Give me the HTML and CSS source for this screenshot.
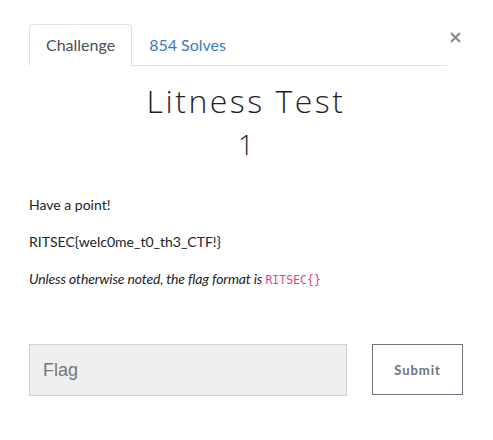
FILE: index.html
```html
<!DOCTYPE html>
<html>
<head>
<meta charset="utf-8">
<link rel="stylesheet" href="styles.css">
</head>
<body>
<div class="modal">
  <div class="head">
    <ul class="tabs">
      <li class="tab active">Challenge</li>
      <li class="tab link">854 Solves</li>
    </ul>
    <button class="close" aria-label="Close">
      <svg width="11" height="11" viewBox="0 0 11 11"><path d="M1 1L10 10M10 1L1 10" stroke="#8c8c8c" stroke-width="2.2" stroke-linecap="butt"/></svg>
    </button>
  </div>
  <h3 class="title">Litness Test</h3>
  <h4 class="value">1</h4>
  <div class="desc">
    <p>Have a point!</p>
    <p>RITSEC{welc0me_t0_th3_CTF!}</p>
    <p><em class="note">Unless otherwise noted, the flag format is <code>RITSEC{}</code></em></p>
  </div>
  <form class="submit-row">
    <input class="flag" type="text" placeholder="Flag">
    <button class="btn" type="button">Submit</button>
  </form>
</div>
</body>
</html>
```
FILE: styles.css
```css
html, body {
  margin: 0;
  padding: 0;
  background: #fff;
}
body {
  font-family: "Lato", "Liberation Sans", sans-serif;
  font-size: 14px;
  line-height: 1.5;
  color: #212529;
}
.modal {
  padding: 24px 30px 0 29px;
}
.head {
  display: flex;
  align-items: flex-start;
}
.tabs {
  list-style: none;
  margin: 0;
  padding: 0;
  display: flex;
  flex: 1;
  border-bottom: 1px solid #dee2e6;
  margin-right: 2px;
}
.tab {
  font-size: 16px;
  line-height: 24px;
  padding: 8px 16px;
  border: 1px solid transparent;
  border-top-left-radius: 4px;
  border-top-right-radius: 4px;
  margin-bottom: -1px;
}
.tab.active {
  color: #495057;
  border-color: #dee2e6 #dee2e6 #fff;
}
.tab.link {
  color: #3a7bbf;
}
.close {
  background: none;
  border: 0;
  padding: 0;
  margin: 8px 2px 0 1px;
  width: 11px;
  height: 11px;
  display: block;
}
.close svg { display: block; }
.title {
  margin: 16px 0 0;
  text-align: center;
  font-family: "Open Sans", "Lato", sans-serif;
  font-weight: 300;
  font-size: 32px;
  letter-spacing: 2.5px;
  line-height: 1.2;
  color: #1f1f2b;
}
.value {
  margin: 8px 0 0;
  text-align: center;
  font-family: "Open Sans", "Lato", sans-serif;
  font-weight: 300;
  font-size: 28px;
  line-height: 1.2;
  color: #1f1f2b;
}
.desc {
  margin-top: 32px;
}
.desc p {
  margin: 0 0 16px;
}
.note {
  letter-spacing: -0.15px;
}
code {
  font-family: "DejaVu Sans Mono", "Liberation Mono", monospace;
  font-size: 11.5px;
  letter-spacing: 0;
  color: #e83e8c;
  font-style: normal;
}
.submit-row {
  margin-top: 55px;
  display: flex;
  gap: 25px;
}
.flag {
  flex: none;
  box-sizing: border-box;
  width: 318px;
  height: 52px;
  background: #efefef;
  border: 1px solid #ced4da;
  padding: 0 13px;
  font-family: "Liberation Sans", Arial, sans-serif;
  font-size: 18px;
  color: #495057;
  outline: none;
}
.flag::placeholder {
  color: #777;
}
.btn {
  box-sizing: border-box;
  width: 92px;
  height: 51px;
  background: #fff;
  border: 1px solid #6c757d;
  font-family: "Lato", sans-serif;
  font-weight: 700;
  font-size: 13px;
  letter-spacing: 1px;
  color: #6c757d;
  padding: 0;
}
```
